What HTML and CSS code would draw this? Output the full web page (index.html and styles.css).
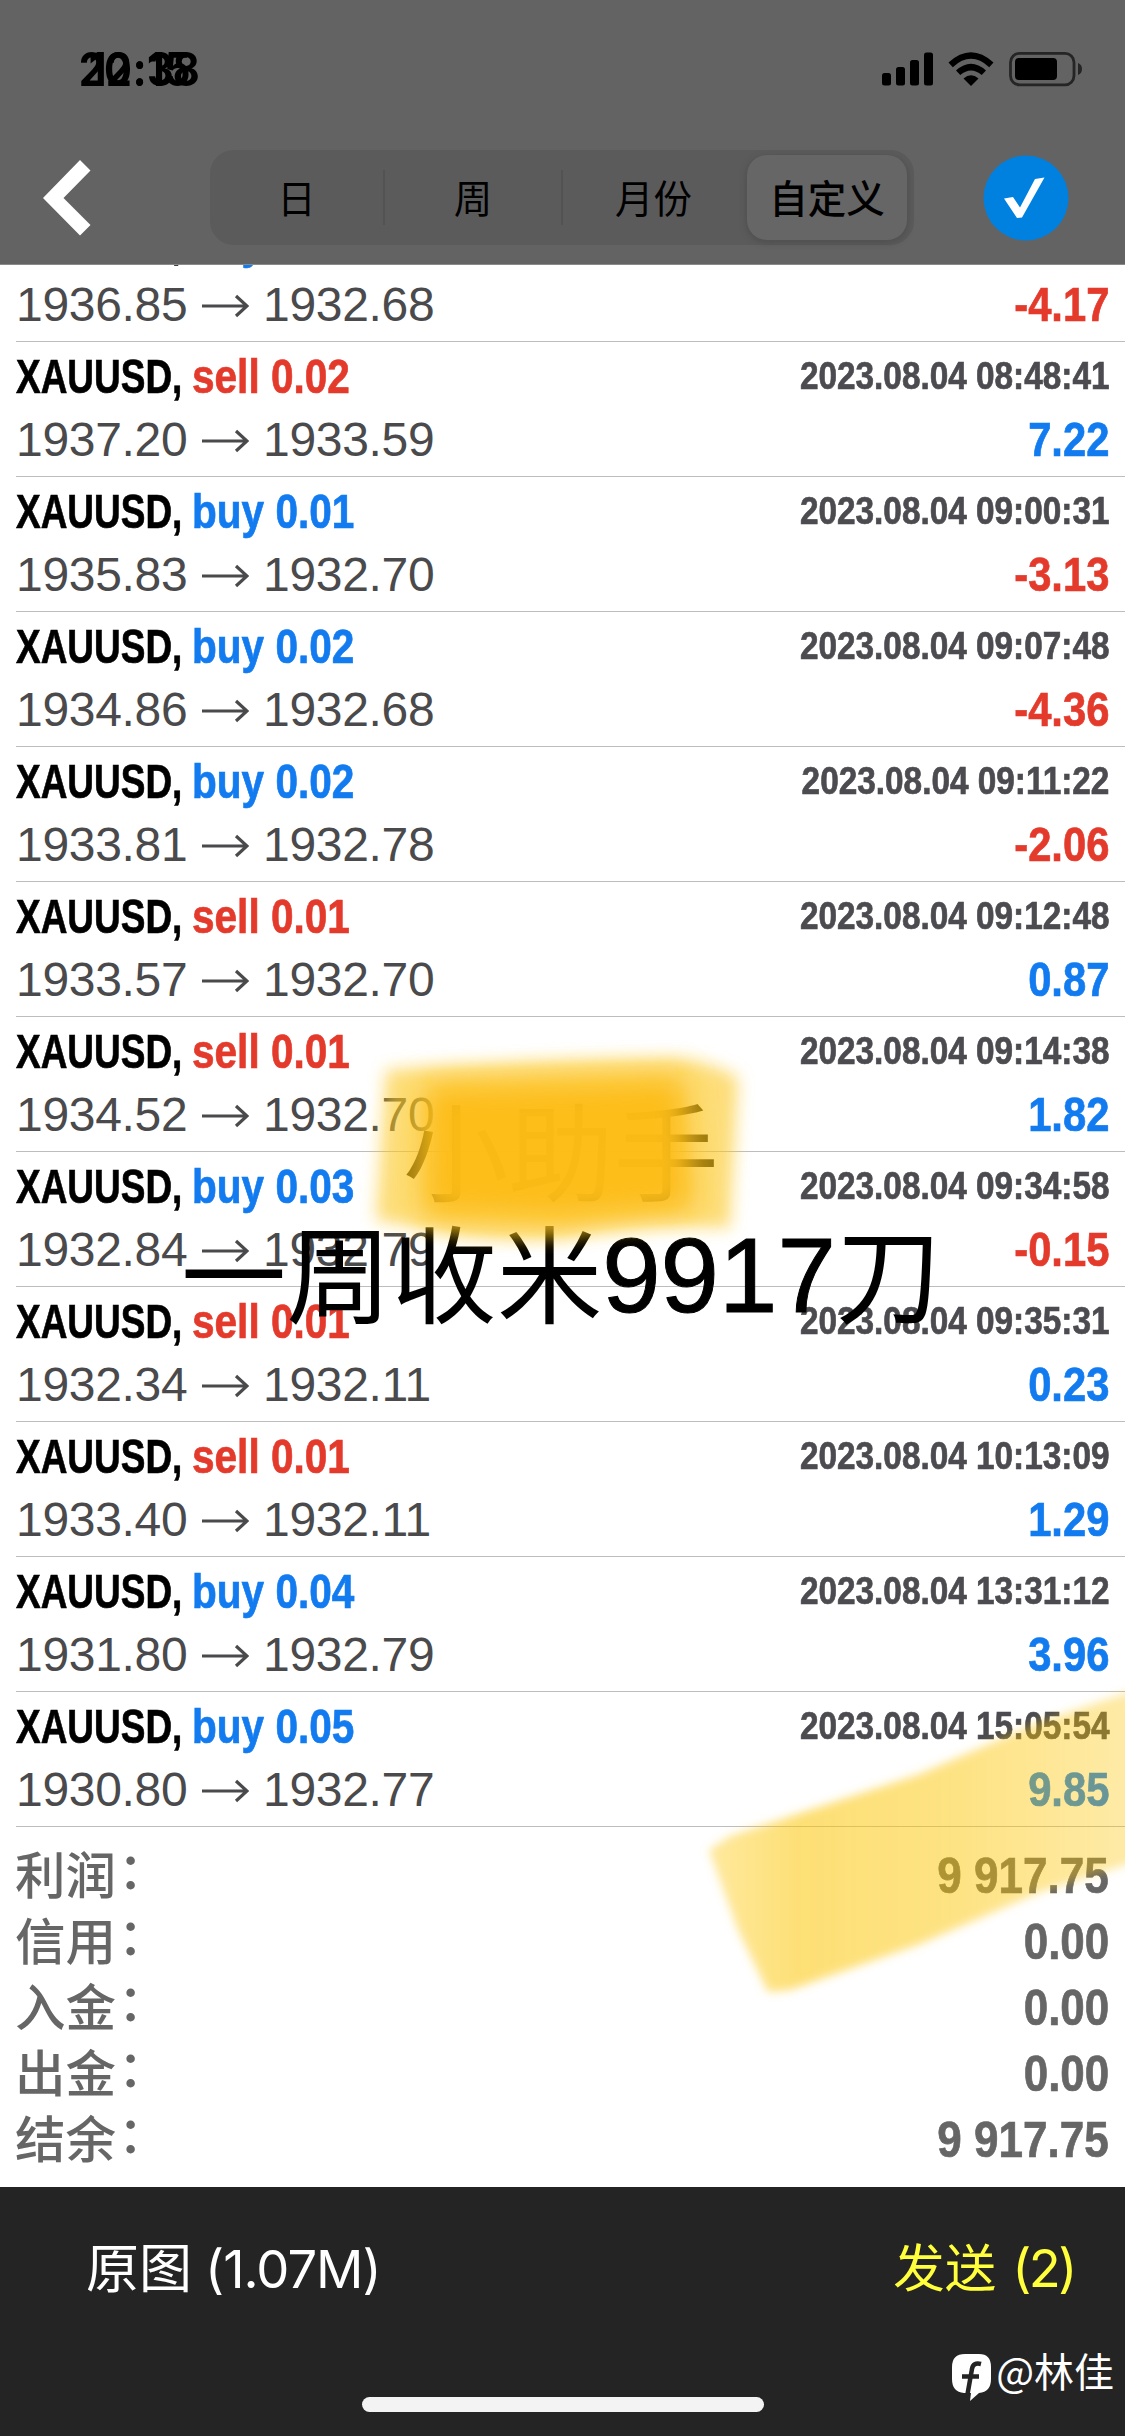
FILE: index.html
```html
<!DOCTYPE html>
<html lang="zh-CN">
<head>
<meta charset="utf-8">
<title>交易历史</title>
<link rel="stylesheet" href="styles.css">
</head>
<body>
<main class="screen">
  <header class="header">
    <div class="status">
      <div class="clock">
        <div class="clock-face"><span>20</span><span>:</span><span>38</span></div>
        <div class="clock-face"><span>12</span><span>:</span><span>15</span></div>
      </div>
      <svg class="status-icons" width="202" height="36" viewBox="881 51 202 36">
        <rect x="882" y="73" width="9" height="12.5" rx="2.5"/>
        <rect x="896" y="67" width="9" height="18.500" rx="2.5"/>
        <rect x="910" y="60" width="9" height="25.5" rx="2.5"/>
        <rect x="924" y="52.500" width="9" height="33" rx="2.5"/>
        <path d="M948.500 62.500Q971 42 993.500 62.500L989.200 67.200Q971 50.500 952.800 67.200Z"/>
        <path d="M956 70.500Q971 57 986 70.500L981.700 75Q971 66 960.300 75Z"/>
        <path d="M963.500 78.500Q971 72 978.500 78.500L971 86Z"/>
        <rect class="battery-shell" x="1010.500" y="53.300" width="63.500" height="31.500" rx="9"/>
        <rect x="1015" y="58" width="42" height="22" rx="4"/>
        <path class="battery-tip" d="M1078 63q4 1.500 4 6t-4 6z"/>
      </svg>
    </div>
    <nav class="nav">
      <svg class="back" width="48" height="76" viewBox="0 0 48 76"><path d="M37 0L47.500 10.500L20.500 38L47.500 65L37 75.500L0 38Z"/></svg>
      <div class="segments">
        <span class="seg">日</span>
        <span class="seg">周</span>
        <span class="seg">月份</span>
        <span class="seg seg-on">自定义</span>
      </div>
      <svg class="check" width="86" height="86" viewBox="0 0 86 86"><circle cx="43" cy="43" r="42.500"/><path d="M21 43.500L30 42L37 52.500L52 24L61.500 22.500L39 62.500L34 63Z"/></svg>
    </nav>
  </header>

  <section class="content">
    <div class="deals" id="deals"></div>
    <dl class="totals">
      <div><dt>利润<i>：</i></dt><dd>9 917.75</dd></div>
      <div><dt>信用<i>：</i></dt><dd>0.00</dd></div>
      <div><dt>入金<i>：</i></dt><dd>0.00</dd></div>
      <div><dt>出金<i>：</i></dt><dd>0.00</dd></div>
      <div><dt>结余<i>：</i></dt><dd>9 917.75</dd></div>
    </dl>
  </section>

  <footer class="footer">
    <div class="actions">
      <span class="original">原图<b>(1.07M)</b></span>
      <span class="send">发送<b>(2)</b></span>
    </div>
    <div class="home-bar"></div>
    <div class="author">
      <svg width="40" height="48" viewBox="0 0 40 48"><path class="bubble" d="M13 0H27Q39 0 39 13V25Q39 38 27 39L18 47L19 39H12Q0 38 0 25V13Q0 0 13 0Z"/><path class="mark" d="M29 10Q21 8 20 15L15 43M10 22.500H27"/></svg>
      <span>@林佳</span>
    </div>
  </footer>

  <div class="note note-name">小助手</div>
  <div class="note note-sum">一周收米<b>9917</b>刀</div>
  <svg class="marker" width="1125" height="1000" viewBox="0 1030 1125 1000">
    <defs>
      <filter id="soft" x="-20%" y="-20%" width="140%" height="140%"><feGaussianBlur stdDeviation="8"/></filter>
      <filter id="softer" x="-20%" y="-30%" width="140%" height="160%"><feGaussianBlur stdDeviation="14"/></filter>
      <filter id="edge" x="-10%" y="-10%" width="120%" height="120%"><feGaussianBlur stdDeviation="5"/></filter>
      <linearGradient id="fade" x1="720" y1="0" x2="1125" y2="0" gradientUnits="userSpaceOnUse">
        <stop offset="0" stop-color="#fcc400" stop-opacity=".4"/>
        <stop offset=".2" stop-color="#fcc400" stop-opacity=".54"/>
        <stop offset=".6" stop-color="#fcc400" stop-opacity=".48"/>
        <stop offset="1" stop-color="#fcc400" stop-opacity=".35"/>
      </linearGradient>
    </defs>
    <path filter="url(#soft)" fill="#fbc71c" fill-opacity=".6" d="M386 1070Q520 1060 675 1058Q712 1062 738 1078L730 1228Q640 1222 565 1238Q480 1242 432 1230L376 1220Z"/>
    <path filter="url(#softer)" fill="#fdbc18" fill-opacity=".96" d="M424 1084L684 1076L694 1210L560 1222L422 1216Z"/>
    <path filter="url(#edge)" fill="url(#fade)" d="M709 1850L730 1836L920 1774L1040 1722L1150 1685V1857L1040 1892L920 1944L790 1990L768 1992L738 1930Z"/>
  </svg>
</main>
<script src="deals.js"></script>
</body>
</html>
```

FILE: deals.js
```js
const deals = [
  ['buy', '0.02', '08:40:12', '1936.85', '1932.68', '-4.17'],
  ['sell', '0.02', '08:48:41', '1937.20', '1933.59', '7.22'],
  ['buy', '0.01', '09:00:31', '1935.83', '1932.70', '-3.13'],
  ['buy', '0.02', '09:07:48', '1934.86', '1932.68', '-4.36'],
  ['buy', '0.02', '09:11:22', '1933.81', '1932.78', '-2.06'],
  ['sell', '0.01', '09:12:48', '1933.57', '1932.70', '0.87'],
  ['sell', '0.01', '09:14:38', '1934.52', '1932.70', '1.82'],
  ['buy', '0.03', '09:34:58', '1932.84', '1932.79', '-0.15'],
  ['sell', '0.01', '09:35:31', '1932.34', '1932.11', '0.23'],
  ['sell', '0.01', '10:13:09', '1933.40', '1932.11', '1.29'],
  ['buy', '0.04', '13:31:12', '1931.80', '1932.79', '3.96'],
  ['buy', '0.05', '15:05:54', '1930.80', '1932.77', '9.85'],
];

document.getElementById('deals').innerHTML = deals.map(([side, lots, time, open, close, profit]) => `
  <article class="deal">
    <div class="line">
      <span class="symbol"><span>XAUUSD,</span></span>
      <span class="side ${side}">${side} ${lots}</span>
      <time class="time">2023.08.04 ${time}</time>
    </div>
    <div class="line">
      <span class="price">${open}</span>
      <svg class="arrow" width="47" height="24" viewBox="0 0 47 24"><path d="M0 12H44M34 2L45 12L34 22"/></svg>
      <span class="price">${close}</span>
      <span class="profit ${profit.startsWith('-') ? 'loss' : 'gain'}">${profit}</span>
    </div>
  </article>`).join('');
```

FILE: styles.css
```css
* { box-sizing: border-box; }
body { margin: 0; background: #fff; font-family: "Liberation Sans", "Noto Sans CJK SC", sans-serif; }
.screen { position: relative; display: flex; flex-direction: column; width: 1125px; height: 2436px; overflow: hidden; }

.header { height: 265px; flex: none; background: #636363; border-bottom: 1px solid #8a8a8a; }
.status { display: flex; justify-content: space-between; height: 150px; padding: 51px 42px 0 78px; }
.clock { display: grid; height: 36px; font: 700 46px/36px Inter, sans-serif; letter-spacing: -1px; }
.clock-face { grid-area: 1 / 1; display: grid; grid-template-columns: 53px 16px 53px; justify-items: center; white-space: nowrap; }
.clock-face span { transform: scaleX(.9); }
.clock-face span:first-child { justify-self: end; transform-origin: 100% 50%; }
.clock-face span:last-child { justify-self: start; transform-origin: 0 50%; }
.status-icons { flex: none; }
.battery-shell { fill: none; stroke: #252525; stroke-width: 2.8; }
.battery-tip { fill: #252525; }
.nav { display: flex; align-items: center; height: 95px; padding: 0 56px 0 43px; justify-content: space-between; }
.back { fill: #fff; margin-right: 119px; }
.segments { display: grid; grid-template-columns: 175px 178px 181px 163px; width: 704px; height: 95px; padding: 5px 0 5px 0; border-radius: 24px; background: #5b5b5c; align-items: center; }
.seg { display: flex; align-items: center; justify-content: center; height: 55px; padding-bottom: 3px; font: 400 38.5px/52px "Noto Sans CJK SC", sans-serif; color: #000; }
.seg:nth-child(-n+2) { border-right: 2px solid #535354; }
.seg-on { height: 85px; margin-left: 3px; border-radius: 20px; background: #666; box-shadow: 0 2px 5px 2px #525252; font-weight: 500; }
.check { flex: none; margin-left: 69px; }
.check circle { fill: #0081df; }
.check path { fill: #fff; }

.content { height: 1922px; flex: none; overflow: hidden; }
.deals { margin-top: -58px; }
.deal { height: 135px; margin-left: 16px; padding: 3px 16px 0 0; border-bottom: 1px solid #bdbdc0; }
.line { display: flex; height: 63px; align-items: center; font-size: 48px; line-height: 63px; white-space: nowrap; }
.symbol, .side, .time, .profit, .totals dd { font-weight: 700; -webkit-text-stroke: .7px currentColor; }
.symbol { width: 176px; color: #000; }
.symbol span { display: inline-block; transform: scaleX(.77); transform-origin: 0 50%; }
.side { transform: scaleX(.845); transform-origin: 0 50%; }
.sell, .loss { color: #e43a2c; }
.buy, .gain { color: #127bf0; }
.time { margin: -2px 0 0 auto; font-size: 38.500px; color: #4b4b50; transform: scaleX(.866); transform-origin: 100% 50%; }
.price { width: 172px; color: #4a4a4c; letter-spacing: -.3px; }
.arrow { margin: 3px 14px 0 14px; fill: none; stroke: #4a4a4c; stroke-width: 3.2; }
.profit { margin-left: auto; transform: scaleX(.87); transform-origin: 100% 50%; }

.totals { margin: 0; padding: 15px 16px 0 15px; color: #666; }
.totals div { display: flex; justify-content: space-between; height: 66px; }
.totals dt { margin-top: -3px; font: 500 50.500px/66px "Noto Sans CJK SC", sans-serif; }
.totals i { display: inline-block; font-style: normal; transform: translate(2px, -5px); }
.totals dd { margin: 0; font-size: 50px; line-height: 68px; transform: scaleX(.88); transform-origin: 100% 50%; }

.footer { position: relative; flex: 1; background: #242424; color: #fff; }
.actions { display: flex; justify-content: space-between; padding: 38px 50px 0 86px; font: 400 53px/80px "Noto Sans CJK SC", sans-serif; }
.actions b { font: 400 52.500px/80px Inter, sans-serif; letter-spacing: -1px; margin-left: 13px; }
.send { color: #ffff3c; font-size: 51.500px; }
.actions .send b { margin-left: 16px; letter-spacing: -2.500px; }
.home-bar { position: absolute; left: 362px; bottom: 24px; width: 402px; height: 15px; border-radius: 8px; background: #f3f3f3; }
.author { position: absolute; right: 11px; bottom: 39px; display: flex; align-items: flex-start; height: 43px; gap: 4px; font: 400 40px/32px "Noto Sans CJK SC", sans-serif; }
.bubble { fill: #fff; }
.mark { fill: none; stroke: #242424; stroke-width: 4.500; }

.note { position: absolute; font: 400 105.300px/120px "Noto Sans CJK SC", sans-serif; white-space: nowrap; color: #000; }
.note b { position: relative; top: -3px; font: 400 105px/120px "Liberation Sans", sans-serif; -webkit-text-stroke: 1px #000; }
.note-name { left: 403px; top: 1087px; }
.note-sum { left: 181px; top: 1209px; }
.marker { position: absolute; left: 0; top: 1030px; }
```
